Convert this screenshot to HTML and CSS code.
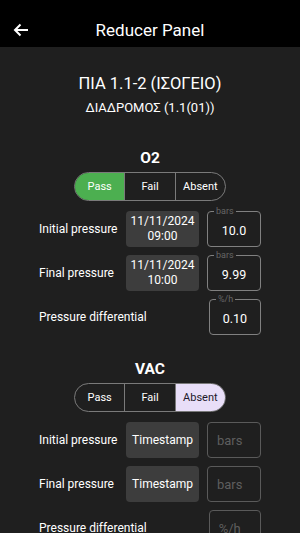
FILE: index.html
```html
<!DOCTYPE html>
<html lang="el">
<head>
  <meta charset="UTF-8" />
  <meta name="viewport" content="width=device-width, initial-scale=1.0">
  <title>Reducer Panel</title>
  <link rel="stylesheet" href="styles.css">
</head>
<body>
  <header class="topbar">
    <button class="back" aria-label="Back">
      <svg width="16" height="14" viewBox="0 0 16 14"><path d="M15 7H2M7.5 1.5L2 7l5.5 5.5" fill="none" stroke="#fff" stroke-width="2"/></svg>
    </button>
    <h1>Reducer Panel</h1>
  </header>

  <main class="panel">
    <h2 class="place">ΠΙΑ 1.1-2 (ΙΣΟΓΕΙΟ)</h2>
    <h3 class="room">ΔΙΑΔΡΟΜΟΣ (1.1(01))</h3>

    <section class="gas">
      <h4>O2</h4>
      <div class="seg">
        <button class="on-pass">Pass</button>
        <button>Fail</button>
        <button>Absent</button>
      </div>
      <div class="row">
        <span class="label">Initial pressure</span>
        <div class="stamp">11/11/2024<br>09:00</div>
        <div class="val"><span class="tag">bars</span>10.0</div>
      </div>
      <div class="row">
        <span class="label">Final pressure</span>
        <div class="stamp">11/11/2024<br>10:00</div>
        <div class="val"><span class="tag">bars</span>9.99</div>
      </div>
      <div class="row">
        <span class="label wide">Pressure differential</span>
        <div class="val"><span class="tag">%/h</span>0.10</div>
      </div>
    </section>

    <section class="gas">
      <h4>VAC</h4>
      <div class="seg">
        <button>Pass</button>
        <button>Fail</button>
        <button class="on-absent">Absent</button>
      </div>
      <div class="row">
        <span class="label">Initial pressure</span>
        <div class="stamp">Timestamp</div>
        <div class="val empty">bars</div>
      </div>
      <div class="row">
        <span class="label">Final pressure</span>
        <div class="stamp">Timestamp</div>
        <div class="val empty">bars</div>
      </div>
      <div class="row">
        <span class="label wide">Pressure differential</span>
        <div class="val empty">%/h</div>
      </div>
    </section>
  </main>
</body>
</html>
```

FILE: styles.css
```css
body {
  margin: 0;
  background: #1f1f1f;
  color: #fff;
  font-family: Roboto, "Noto Sans", sans-serif;
  height: 533px;
  overflow: hidden;
}
.topbar {
  background: #000;
  height: 47px;
  box-sizing: border-box;
  padding-top: 19px;
  display: flex;
  justify-content: center;
  position: relative;
}
.topbar h1 {
  margin: 0;
  font-size: 17px;
  line-height: 22px;
  font-weight: 400;
}
.back {
  position: absolute;
  left: 12px;
  top: 23px;
  background: none;
  border: 0;
  padding: 0;
  width: 18px;
  height: 16px;
}
.panel {
  text-align: center;
  padding-top: 25px;
}
.place {
  margin: 0;
  font-size: 16.5px;
  font-weight: 400;
  line-height: 24px;
}
.room {
  margin: 2px 0 0;
  font-size: 13px;
  font-weight: 400;
  line-height: 20px;
}
.gas {
  margin-top: 30px;
}
.gas + .gas {
  margin-top: 24px;
}
.gas h4 {
  margin: 0;
  font-size: 15.5px;
  font-weight: 700;
  line-height: 20px;
}
.seg {
  display: flex;
  width: 152px;
  height: 29px;
  margin: 4px auto 10px;
  border: 1px solid #7a7a7a;
  border-radius: 15px;
  overflow: hidden;
  box-sizing: border-box;
}
.seg button {
  flex: 1;
  background: none;
  border: 0;
  border-left: 1px solid #7a7a7a;
  color: #fff;
  font-family: inherit;
  font-size: 11px;
  font-weight: 400;
  padding: 0;
}
.seg button:first-child {
  border-left: 0;
}
.seg .on-pass {
  background: #4caf50;
}
.seg .on-absent {
  background: #e8def8;
  color: #1d192b;
}
.row {
  display: flex;
  align-items: center;
  width: 222px;
  margin: 0 auto 8px;
  text-align: left;
}
.label {
  width: 87px;
  font-size: 12px;
  white-space: nowrap;
}
.label.wide {
  width: 168px;
}
.stamp {
  width: 73px;
  height: 36px;
  background: #3d3d3d;
  border-radius: 4px;
  display: flex;
  align-items: center;
  justify-content: center;
  text-align: center;
  font-size: 12px;
  font-weight: 400;
  line-height: 15px;
}
.val {
  position: relative;
  width: 54px;
  height: 36px;
  margin-left: 8px;
  box-sizing: border-box;
  border: 1px solid #808080;
  border-radius: 4px;
  display: flex;
  align-items: center;
  justify-content: center;
  padding-top: 2px;
  font-size: 12.5px;
  font-weight: 400;
}
.tag {
  position: absolute;
  left: 6px;
  top: -6px;
  padding: 0 2px;
  background: #1f1f1f;
  font-size: 9px;
  line-height: 10px;
  color: #666;
}
.val.empty {
  justify-content: flex-start;
  padding: 0 0 0 9px;
  border-color: #5a5a5a;
  color: #5e5e5e;
  font-size: 13px;
}
```
